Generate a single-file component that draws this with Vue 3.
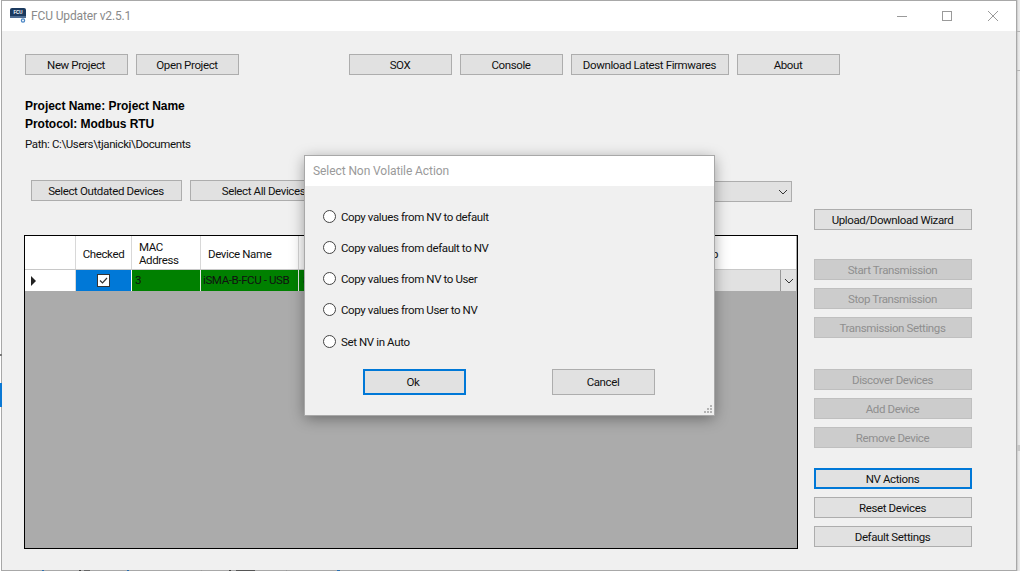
<script setup>
const topLeft = ['New Project', 'Open Project']
const topMid = [
  { label: 'SOX', cls: 'w103' },
  { label: 'Console', cls: 'w103' },
  { label: 'Download Latest Firmwares', cls: 'w158' },
  { label: 'About', cls: 'w103' }
]
const sideGroups = [
  { cls: 'g-upload', items: [{ label: 'Upload/Download Wizard' }] },
  { cls: 'g-trans', items: [
    { label: 'Start Transmission', off: true },
    { label: 'Stop Transmission', off: true },
    { label: 'Transmission Settings', off: true }
  ] },
  { cls: 'g-dev', items: [
    { label: 'Discover Devices', off: true },
    { label: 'Add Device', off: true },
    { label: 'Remove Device', off: true }
  ] },
  { cls: 'g-nv', items: [
    { label: 'NV Actions', focus: true },
    { label: 'Reset Devices' },
    { label: 'Default Settings' }
  ] }
]
const options = [
  'Copy values from NV to default',
  'Copy values from default to NV',
  'Copy values from NV to User',
  'Copy values from User to NV',
  'Set NV in Auto'
]
const peeks = [
  { x: 42, w: 2, c: '#2a6fb0' },
  { x: 79, w: 2, c: '#444' },
  { x: 84, w: 6, c: '#666' },
  { x: 127, w: 2, c: '#2a6fb0' },
  { x: 201, w: 1, c: '#999' },
  { x: 229, w: 2, c: '#444' },
  { x: 236, w: 19, c: '#555' },
  { x: 286, w: 1, c: '#999' },
  { x: 337, w: 3, c: '#2a6fb0' }
]
</script>

<template>
  <div class="page">
    <div class="window">
      <header class="titlebar">
        <svg class="logo" width="16" height="15" viewBox="0 0 16 15">
          <path d="M0 2Q0 0 2 0H14q2 0 2 2V8H0Z" fill="#1b3a5f" />
          <path d="M0 8H16V10H0Z" fill="#4d6c92" />
          <text x="8" y="5.800" text-anchor="middle" class="logo-text">FCU</text>
          <circle cx="13" cy="12.500" r="1.600" fill="none" stroke="#4a86c5" stroke-width="1.300" />
        </svg>
        <span class="title">FCU Updater v2.5.1</span>
        <div class="controls">
          <svg width="12" height="12" viewBox="0 0 12 12"><path d="M1 6.500H11" stroke="#9a9a9a" fill="none" /></svg>
          <svg width="12" height="12" viewBox="0 0 12 12"><rect x="1.500" y="1.500" width="9" height="9" stroke="#9a9a9a" fill="none" /></svg>
          <svg width="12" height="12" viewBox="0 0 12 12"><path d="M1 1L11 11M11 1L1 11" stroke="#9a9a9a" fill="none" /></svg>
        </div>
      </header>

      <div class="body">
        <div class="main">
          <div class="toolbar">
            <div class="btn-row">
              <button v-for="b in topLeft" :key="b" class="btn w103">{{ b }}</button>
            </div>
            <div class="btn-row mid">
              <button v-for="b in topMid" :key="b.label" class="btn" :class="b.cls">{{ b.label }}</button>
            </div>
          </div>

          <div class="info">
            <div class="strong">Project Name: Project Name</div>
            <div class="strong">Protocol: Modbus RTU</div>
            <div class="path">Path: C:\Users\tjanicki\Documents</div>
          </div>

          <div class="select-row">
            <button class="btn sel-out">Select Outdated Devices</button>
            <button class="btn sel-all">Select All Devices</button>
            <div class="combo">
              <svg width="10" height="6" viewBox="0 0 10 6"><path d="M1 1L5 5L9 1" fill="none" stroke="#333" /></svg>
            </div>
          </div>

          <div class="grid">
            <div class="grid-row head">
              <div class="c c-rh"></div>
              <div class="c c-chk center">Checked</div>
              <div class="c c-mac">MAC<br />Address</div>
              <div class="c c-name">Device Name</div>
              <div class="c c-rest">Group</div>
            </div>
            <div class="grid-row data">
              <div class="c c-rh arrow-cell"><span class="arrow"></span></div>
              <div class="c c-chk sel center">
                <svg width="13" height="13" viewBox="0 0 13 13">
                  <rect x="0.500" y="0.500" width="12" height="12" fill="#fff" stroke="#333" />
                  <path d="M3 6.500L5.500 9L10 4" fill="none" stroke="#333" stroke-width="1.200" />
                </svg>
              </div>
              <div class="c c-mac green">3</div>
              <div class="c c-name green nowrap">iSMA-B-FCU - USB</div>
              <div class="c c-fw green">8</div>
              <div class="c c-rest cmb">
                <span class="cmb-btn">
                  <svg width="10" height="6" viewBox="0 0 10 6"><path d="M1 1L5 5L9 1" fill="none" stroke="#333" /></svg>
                </span>
              </div>
            </div>
          </div>
        </div>

        <aside class="side">
          <div v-for="g in sideGroups" :key="g.cls" class="side-group" :class="g.cls">
            <button
              v-for="b in g.items"
              :key="b.label"
              class="btn side-btn"
              :class="{ off: b.off, focus: b.focus }"
            >{{ b.label }}</button>
          </div>
        </aside>
      </div>
    </div>

    <!-- Slivers of the desktop that show around the window -->
    <div class="edge-right">
      <span class="tick t1"></span>
      <span class="tick t2"></span>
      <span class="band"></span>
    </div>
    <span class="edge-blue"></span>
    <span class="edge-tick"></span>
    <span
      v-for="p in peeks"
      :key="p.x"
      class="peek"
      :style="{ left: p.x + 'px', width: p.w + 'px', background: p.c }"
    ></span>

    <div class="dialog">
      <div class="dlg-title">Select Non Volatile Action</div>
      <div class="dlg-body">
        <label v-for="o in options" :key="o" class="radio">
          <span class="dot"></span>{{ o }}
        </label>
        <div class="dlg-actions">
          <button class="btn w103 dlg-btn dlg-ok focus">Ok</button>
          <button class="btn w103 dlg-btn">Cancel</button>
        </div>
      </div>
      <svg class="grip" width="10" height="10" viewBox="0 0 10 10">
        <g fill="#b4b4b4">
          <rect x="7" y="1" width="2" height="2" />
          <rect x="4" y="4" width="2" height="2" />
          <rect x="7" y="4" width="2" height="2" />
          <rect x="1" y="7" width="2" height="2" />
          <rect x="4" y="7" width="2" height="2" />
          <rect x="7" y="7" width="2" height="2" />
        </g>
      </svg>
    </div>
  </div>
</template>

<style>
html, body { margin: 0; background: #fff; }
</style>

<style scoped>
.page {
  position: relative;
  width: 1020px;
  height: 571px;
  overflow: hidden;
  background: #fff;
  font-family: Roboto, "Liberation Sans", Arial, sans-serif;
  font-size: 11.500px;
  letter-spacing: -0.38px;
  color: #111;
}
.window {
  width: 1016px;
  height: 571px;
  margin-left: 1px;
  box-sizing: border-box;
  border: 1px solid #a8a8a8;
  display: flex;
  flex-direction: column;
  background: #f0f0f0;
}
.titlebar {
  height: 30px;
  flex: none;
  background: #fff;
  display: flex;
  align-items: center;
  padding-left: 8px;
  box-sizing: border-box;
}
.logo { margin-right: 5px; margin-top: -1px; }
.logo-text { font: 700 4.500px "Liberation Sans", sans-serif; fill: #fff; letter-spacing: 0; }
.title { color: #8a8a8a; font-size: 12px; letter-spacing: -0.14px; }
.controls {
  margin-left: auto;
  display: flex;
  gap: 33px;
  padding-right: 17px;
}
.controls svg:last-child { margin-left: 1px; }
.body { flex: 1; display: flex; min-height: 0; }
.main { width: 812px; flex: none; padding: 23px 0 0 23px; box-sizing: border-box; }
.toolbar { display: flex; height: 21px; }
.btn-row { display: flex; gap: 8px; }
.mid { margin-left: 110px; }
.btn {
  height: 21px;
  box-sizing: border-box;
  border: 1px solid #adadad;
  background: #e1e1e1;
  font: 11.500px Roboto, "Liberation Sans", Arial, sans-serif;
  letter-spacing: -0.38px;
  color: #111;
  padding: 0 1px 0 0;
  white-space: nowrap;
}
.w103 { width: 103px; }
.w158 { width: 158px; }
.focus { border: 2px solid #0078d7; }
.info { margin-top: 22px; line-height: 18px; }
.strong {
  font-family: "Liberation Sans", Arial, sans-serif;
  font-weight: 700;
  color: #000;
  font-size: 12px;
  letter-spacing: -0.04px;
}
.path { margin-top: 2px; }
.select-row { display: flex; margin-top: 27px; padding-left: 6px; }
.sel-out { width: 151px; margin-right: 8px; }
.sel-all { width: 148px; margin-right: 12px; }
.combo {
  width: 442px;
  height: 21px;
  margin-top: 1px;
  box-sizing: border-box;
  border: 1px solid #adadad;
  background: #e1e1e1;
  display: flex;
  align-items: center;
  justify-content: flex-end;
  padding-right: 3px;
}
.grid {
  margin: 33px 0 0 -1px;
  width: 774px;
  height: 314px;
  box-sizing: border-box;
  border: 1px solid #000;
  background: #ababab;
}
.grid-row { display: flex; margin-right: 1px; }
.head { height: 33px; background: #fff; border-bottom: 1px solid #c8c8c8; box-sizing: content-box; }
.data { height: 21px; margin-right: 1px; }
.c {
  box-sizing: border-box;
  display: flex;
  align-items: center;
  border-right: 1px solid #d8d8d8;
  padding-left: 6px;
  line-height: 13px;
}
.head .c { display: block; padding-top: 12px; }
.head .c-mac { padding-top: 5px; }
.head .c-rh { padding: 0; }
.c-rh { width: 51px; background: #fff; }
.c-chk { width: 56px; }
.c-mac { width: 69px; padding-left: 3px; }
.head .c-mac { padding-left: 7px; }
.c-name { width: 98px; padding-left: 7px; }
.c-fw { width: 100px; padding-left: 4px; }
.c-rest { flex: 1; border-right: 0; padding-left: 390px; }
.center { justify-content: center; padding-left: 0; text-align: center; }
.nowrap { white-space: nowrap; padding-left: 2px; }
.sel { background: #0078d7; border-right: 1px solid #fff; }
.green { background: #008000; color: #111; border-right: 1px solid #e8e8e8; }
.arrow-cell { padding-left: 6px; }
.arrow {
  width: 0;
  height: 0;
  border-left: 5px solid #222;
  border-top: 5px solid transparent;
  border-bottom: 5px solid transparent;
}
.cmb { background: #e1e1e1; padding: 0; justify-content: flex-end; }
.cmb-btn {
  width: 16px;
  height: 21px;
  box-sizing: border-box;
  border-left: 1px solid #999;
  display: flex;
  align-items: center;
  justify-content: center;
}
.side { flex: 1; padding-top: 178px; box-sizing: border-box; }
.side-group { display: flex; flex-direction: column; gap: 8px; width: 158px; }
.g-trans { margin-top: 29px; }
.g-dev { margin-top: 31px; }
.g-nv { margin-top: 20px; }
.side-btn { width: 158px; }
.off { background: #cccccc; border-color: #bfbfbf; color: #8f8f8f; }

.edge-right {
  position: absolute;
  left: 1017px;
  top: 0;
  width: 3px;
  height: 571px;
  background: linear-gradient(90deg, #c4c4c4, #e4e4e4 40%, #ececec);
}
.tick { position: absolute; left: 0; width: 3px; height: 1px; background: #b5b5b5; }
.t1 { top: 31px; }
.t2 { top: 70px; }
.band { position: absolute; left: 0; top: 445px; width: 3px; height: 6px; background: #c8c8c8; }
.edge-blue { position: absolute; left: 0; top: 383px; width: 2px; height: 24px; background: #0a78d4; }
.edge-tick { position: absolute; left: 0; top: 354px; width: 2px; height: 2px; background: #777; }
.peek { position: absolute; top: 570px; height: 1px; }

.dialog {
  position: absolute;
  left: 305px;
  top: 156px;
  width: 409px;
  height: 259px;
  background: #f0f0f0;
  box-shadow: 0 0 0 1px #a8a8a8, 0 3px 14px rgba(0, 0, 0, 0.4);
}
.dlg-title {
  height: 30px;
  background: #fff;
  color: #9a9a9a;
  line-height: 30px;
  padding-left: 8px;
  font-size: 12px;
  letter-spacing: -0.08px;
}
.dlg-body { padding: 15px 0 0 18px; }
.radio {
  display: flex;
  align-items: center;
  height: 31px;
  gap: 5px;
}
.radio:nth-child(5) { margin-top: 1px; }
.dot {
  width: 13px;
  height: 13px;
  box-sizing: border-box;
  border: 1px solid #444;
  border-radius: 50%;
  background: #fff;
}
.dlg-actions { display: flex; gap: 86px; margin: 12px 0 0 40px; }
.dlg-btn { height: 26px; }
.dlg-ok { padding-right: 3px; }
.grip { position: absolute; right: 1px; bottom: 1px; }
</style>
